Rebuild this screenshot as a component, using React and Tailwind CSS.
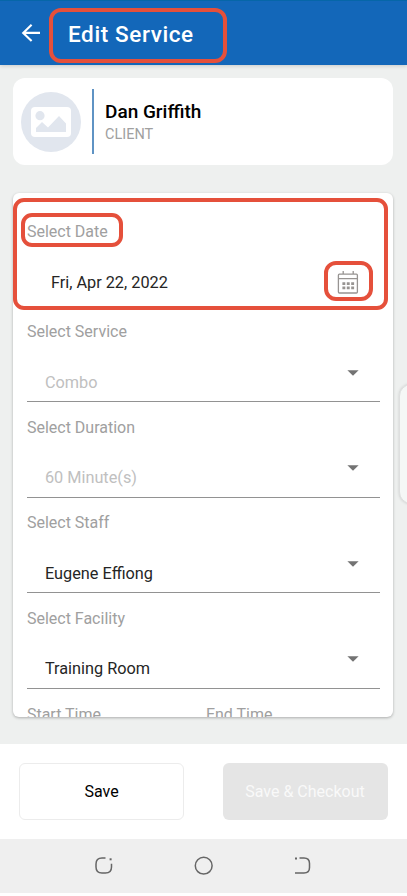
const FIELDS = [
  { label: 'Select Service', value: 'Combo', disabled: true },
  { label: 'Select Duration', value: '60 Minute(s)', disabled: true },
  { label: 'Select Staff', value: 'Eugene Effiong' },
  { label: 'Select Facility', value: 'Training Room' },
]

function BackIcon() {
  return (
    <svg width="20" height="20" viewBox="0 0 20 20" fill="none" stroke="#fff" strokeWidth="2.1">
      <path d="M19 9.9H2.4M10.6 1.7L2.2 9.9l8.4 8.2" />
    </svg>
  )
}

function PictureIcon() {
  return (
    <svg width="42" height="32" viewBox="0 0 42 32">
      <rect x="1" y="1" width="40" height="30" rx="4" fill="#fff" />
      <circle cx="10" cy="9.7" r="4.6" fill="#e1e6ee" />
      <path d="M6 26v-4l6-6 6 5.5L29 10l7 7.5V26z" fill="#e1e6ee" />
    </svg>
  )
}

function CalendarIcon() {
  return (
    <svg width="22" height="24" viewBox="0 0 22 24" fill="none" stroke="#979492" strokeWidth="1.3">
      <rect x="1.4" y="4.2" width="19" height="18.8" rx="1" />
      <path d="M1.4 8.6h19M6.2 1v3M16.2 1v3" />
      <path d="M5.4 13.7h12M5.4 17.9h12" strokeWidth="2.8" strokeDasharray="2.9 1.5" />
    </svg>
  )
}

function SelectField({ label, value, disabled }) {
  return (
    <div className="flex h-[95.6px] shrink-0 flex-col border-b border-[#929292]">
      <div className="h-[51px] pt-[15.7px] text-base leading-5 text-[#a0a0a0]">{label}</div>
      <div className="flex justify-between pl-[18px] pr-[21px]">
        <span className={`pt-[15px] text-[16.3px] leading-5 ${disabled ? 'text-[#c0c0c0]' : 'text-[#252525]'}`}>
          {value}
        </span>
        <svg className="mt-[12px]" width="12" height="6" viewBox="0 0 12 6">
          <path d="M0.4 0.2h11.2L6 5.8z" fill="#737373" />
        </svg>
      </div>
    </div>
  )
}

export default function App() {
  return (
    <div className="relative h-[896px] w-[407px] overflow-hidden bg-white font-[Roboto,sans-serif]">
      {/* Header */}
      <header className="relative z-10 flex h-[64.5px] items-center border-t border-[#0666a8] bg-[#1367b9] pl-[21px] shadow-[0_1px_4px_rgba(0,0,0,0.16)]">
        <BackIcon />
        <h1 className="ml-2 mt-[6px] h-[55px] w-[178px] rounded-[12px] border-4 border-[#e5503b] pl-[15px] text-[22.5px] font-medium leading-[45px] tracking-[0.6px] text-white">
          Edit Service
        </h1>
      </header>

      <main className="h-[679px] bg-[#eef0ef] pl-[13.4px] pr-[13.6px] pt-[13.5px]">
        {/* Client */}
        <section className="flex h-[87px] items-center rounded-[12px] bg-white pl-2">
          <div className="flex h-[60px] w-[60px] items-center justify-center rounded-full bg-[#e1e6ee]">
            <PictureIcon />
          </div>
          <div className="ml-[10.6px] h-[65px] w-[2px] bg-[#5f93c4]" />
          <div className="ml-[11px] pt-[3px]">
            <div className="text-[19px] font-medium leading-6 text-black">Dan Griffith</div>
            <div className="text-[14.5px] leading-[22px] text-[#a0a0a0]">CLIENT</div>
          </div>
        </section>

        {/* Form */}
        <section className="mt-[28px] flex h-[523.5px] flex-col overflow-hidden rounded-[6px] bg-white px-[13.5px] shadow-[0_1px_3px_rgba(0,0,0,0.28)]">
          <div className="h-[113.6px] shrink-0 pt-[28.5px]">
            <div className="text-base leading-5 text-[#a0a0a0]">Select Date</div>
            <div className="flex h-[64px] items-end justify-between pb-[11px] pl-6 pr-[21px]">
              <span className="text-[16.3px] leading-6 text-[#252525]">Fri, Apr 22, 2022</span>
              <div className="pb-px">
                <CalendarIcon />
              </div>
            </div>
            <div className="ml-[6px] h-px bg-[#c9c9c9]" />
          </div>
          {FIELDS.map(f => (
            <SelectField key={f.label} {...f} />
          ))}
          <div className="flex pt-[16px] text-base leading-5 text-[#a0a0a0]">
            <span className="w-[179px]">Start Time</span>
            <span>End Time</span>
          </div>
        </section>
      </main>

      {/* Actions */}
      <div className="flex h-[95px] items-center justify-between pl-[19px] pr-[19.5px]">
        <button className="h-[57px] w-[165px] rounded-[6px] border border-[#ececec] pt-[2px] text-base text-black">
          Save
        </button>
        <button className="h-[57px] w-[165px] rounded-[6px] bg-[#e5e5e5] pt-[2px] text-base text-[#f9f9f9]">
          Save & Checkout
        </button>
      </div>

      {/* System navigation */}
      <nav className="flex h-[54.5px] items-center justify-center gap-[80px] bg-[#efefef]">
        <svg width="20" height="20" viewBox="0 0 20 20" fill="none" stroke="#666" strokeWidth="1.5">
          <path d="M11.5 2H8Q2 2 2 8v3q0 6 6 6h3.5q6 0 6-6V7.8" />
          <path d="M15.6 2.3h2v2h-2z" fill="#666" stroke="none" />
        </svg>
        <svg width="20" height="20" viewBox="0 0 20 20" fill="none" stroke="#666" strokeWidth="1.5">
          <circle cx="9.7" cy="9.7" r="8.4" />
        </svg>
        <svg width="20" height="20" viewBox="0 0 20 20" fill="none" stroke="#666" strokeWidth="1.5">
          <path d="M5.5 2H10q5.5 0 5.5 5.5v4q0 5.5-5.5 5.5H1" />
          <path d="M1 1.5h2v2H1z" fill="#666" stroke="none" />
        </svg>
      </nav>

      {/* Highlights */}
      <div className="absolute left-[13px] top-[198px] h-[112px] w-[375px] rounded-[11px] border-4 border-[#e5503b]" />
      <div className="absolute left-[21px] top-[213px] h-[34px] w-[102px] rounded-[11px] border-4 border-[#e5503b]" />
      <div className="absolute left-[324px] top-[261px] h-[40px] w-[49px] rounded-[12px] border-4 border-[#e5503b]" />

      {/* Edge panel handle */}
      <div className="absolute -right-4 top-[384px] h-[120px] w-6 rounded-[14px] border border-[#dedfdf] bg-[#f5f7f6] shadow-[0_0_3px_rgba(0,0,0,0.15)]" />
    </div>
  )
}
